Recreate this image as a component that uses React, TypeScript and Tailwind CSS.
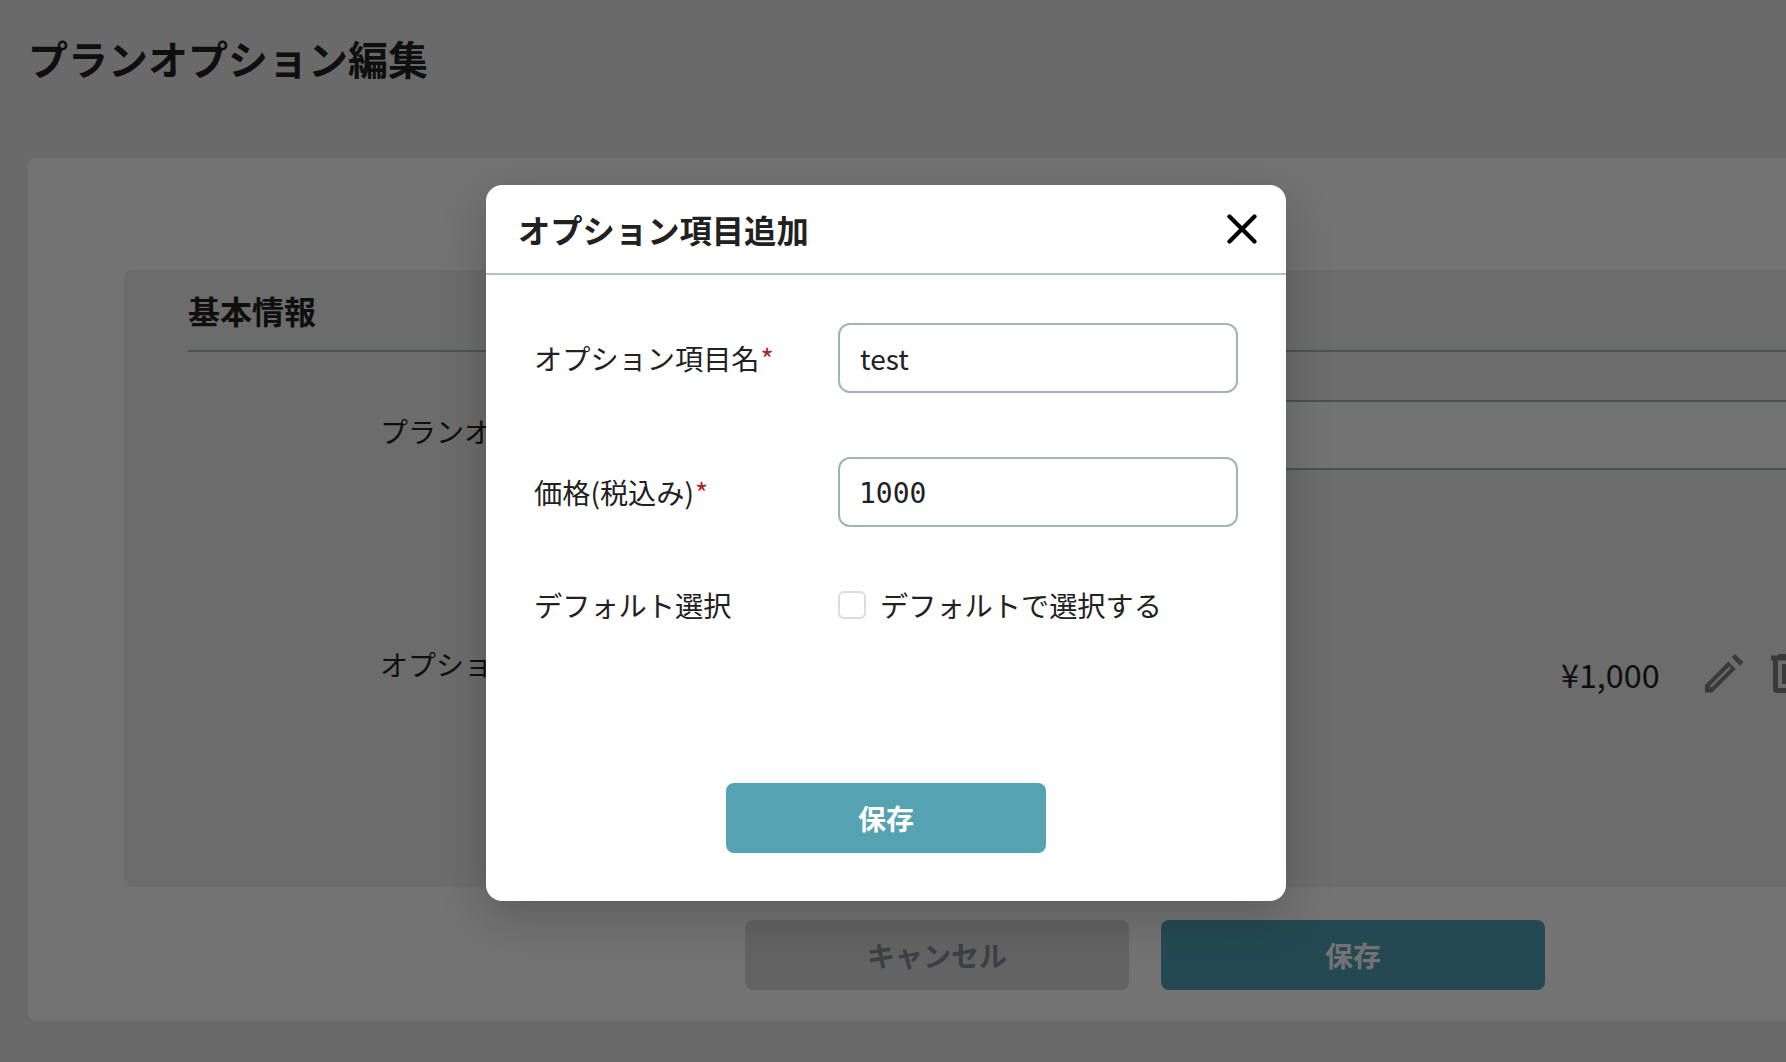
import React from "react";

const FONT = "font-['Noto_Sans_CJK_JP','Noto_Sans',sans-serif]";

function Pencil() {
  return (
    <svg width="39" height="39" viewBox="0 0 39 39" className="shrink-0 text-[#808080]" fill="currentColor" aria-hidden="true">
      <path d="M30 0 L38.4 8.3 L35 11.8 L26.7 3.3 Z" />
      <path
        fillRule="evenodd"
        d="M23.4 7.6 L30.8 15 L7.2 38.5 L0 38.5 L0 31 Z M24.4 12.4 L5.4 31.6 L5.4 33.2 L6.8 33.2 L25.9 14 Z"
      />
    </svg>
  );
}

function Trash() {
  return (
    <svg width="30" height="39" viewBox="0 0 30 39" className="shrink-0 text-[#808080]" fill="currentColor" aria-hidden="true">
      <path
        fillRule="evenodd"
        d="M7 0 H23 V1.5 H30 V6.5 H28 V35 Q28 39 24 39 H6 Q2 39 2 35 V6.5 H0 V1.5 H7 Z M7 6.5 V34 H23 V6.5 Z"
      />
      <rect x="11" y="10" width="8" height="20" />
    </svg>
  );
}

function Required() {
  return <span className="ml-[1px] text-[#ab2430]">*</span>;
}

export default function App() {
  return (
    <div className={`relative h-[1062px] w-[1786px] overflow-hidden bg-[#ebebeb] text-[#232323] ${FONT}`}>
      {/* Page beneath the dialog */}
      <h1 className="pl-[28px] pt-[28px] text-[40px] font-bold leading-[60px]">プランオプション編集</h1>

      <div className="ml-[28px] mt-[70px] flex h-[863px] w-[1900px] flex-col rounded-lg bg-white pt-[112px]">
        <section className="ml-[96px] h-[617px] rounded-lg bg-[#f0f0f0] pl-[64px]">
          <h2 className="flex h-[82px] items-center border-b-2 border-[#a9b9bb] text-[32px] font-bold">基本情報</h2>

          <div className="mt-[48px] flex h-[70px] items-center pl-[192px]">
            <span className="w-[380px] shrink-0 pb-[9px] text-[28px]">プランオプション名</span>
            <div className="h-[70px] w-[1300px] rounded-lg border-2 border-[#a3b3b6] bg-white" />
          </div>

          <div className="mt-[173px] flex items-start pl-[192px]">
            <span className="w-[380px] shrink-0 text-[28px] leading-[42px]">オプション項目</span>
            <div className="ml-[801px] flex items-start">
              <span className="mt-[7px] text-[32.3px] leading-[48px]">¥1,000</span>
              <div className="ml-[45px] mt-[11px]">
                <Pencil />
              </div>
              <div className="ml-[27px] mt-[11px]">
                <Trash />
              </div>
            </div>
          </div>
        </section>

        <div className="ml-[717px] mt-[33px] flex gap-[32px]">
          <button className="h-[70px] w-[384px] rounded-lg bg-[#dcdcdc] text-[28px] font-bold text-[#868f99]">キャンセル</button>
          <button className="h-[70px] w-[384px] rounded-lg bg-[#52a2b5] text-[28px] font-bold text-white">保存</button>
        </div>
      </div>

      {/* Dialog overlay */}
      <div className="absolute inset-0 bg-black/55 pl-[486px] pt-[185px]">
        <div className="flex h-[716px] w-[800px] flex-col rounded-[16px] bg-white shadow-[0_16px_48px_rgba(0,0,0,0.2)]">
          <header className="flex h-[90px] shrink-0 items-center justify-between border-b-2 border-[#b2c3c6] pl-[32px] pr-[29px]">
            <h3 className="text-[32.3px] font-bold text-[#212121]">オプション項目追加</h3>
            <button aria-label="close">
              <svg width="30" height="30" viewBox="0 0 30 30" className="text-black" fill="none" stroke="currentColor" strokeWidth="4.2" strokeLinecap="round" aria-hidden="true">
                <path d="M2.5 2.5 L27.5 27.5 M27.5 2.5 L2.5 27.5" />
              </svg>
            </button>
          </header>

          <div className="flex flex-1 flex-col px-[48px] pt-[48px] text-[28.2px] text-[#212121]">
            <div className="flex h-[70px] items-center">
              <label className="w-[304px] shrink-0">
                オプション項目名
                <Required />
              </label>
              <input
                readOnly
                value="test"
                className="h-[70px] w-[400px] rounded-[12px] border-2 border-[#a3b3b6] bg-white pl-[20px] pr-[19px] text-[28px] text-[#212121] outline-none"
              />
            </div>

            <div className="mt-[64px] flex h-[70px] items-center">
              <label className="w-[304px] shrink-0">
                価格(税込み)
                <Required />
              </label>
              <input
                readOnly
                value="1000"
                className="h-[70px] w-[400px] rounded-[12px] border-2 border-[#a3b3b6] bg-white px-[19px] pt-[2px] font-['DejaVu_Sans_Mono',monospace] text-[28px] text-[#212121] outline-none"
              />
            </div>

            <div className="mt-[64px] flex h-[28px] items-center">
              <span className="w-[304px] shrink-0">デフォルト選択</span>
              <span className="h-[28px] w-[28px] shrink-0 rounded-[6px] border-2 border-[#dcdcdc] bg-white" />
              <span className="ml-[14px]">デフォルトで選択する</span>
            </div>

            <div className="mt-[164px] flex justify-center">
              <button className="h-[70px] w-[320px] rounded-lg bg-[#55a2b2] text-[28px] font-bold text-white">保存</button>
            </div>
          </div>
        </div>
      </div>
    </div>
  );
}
